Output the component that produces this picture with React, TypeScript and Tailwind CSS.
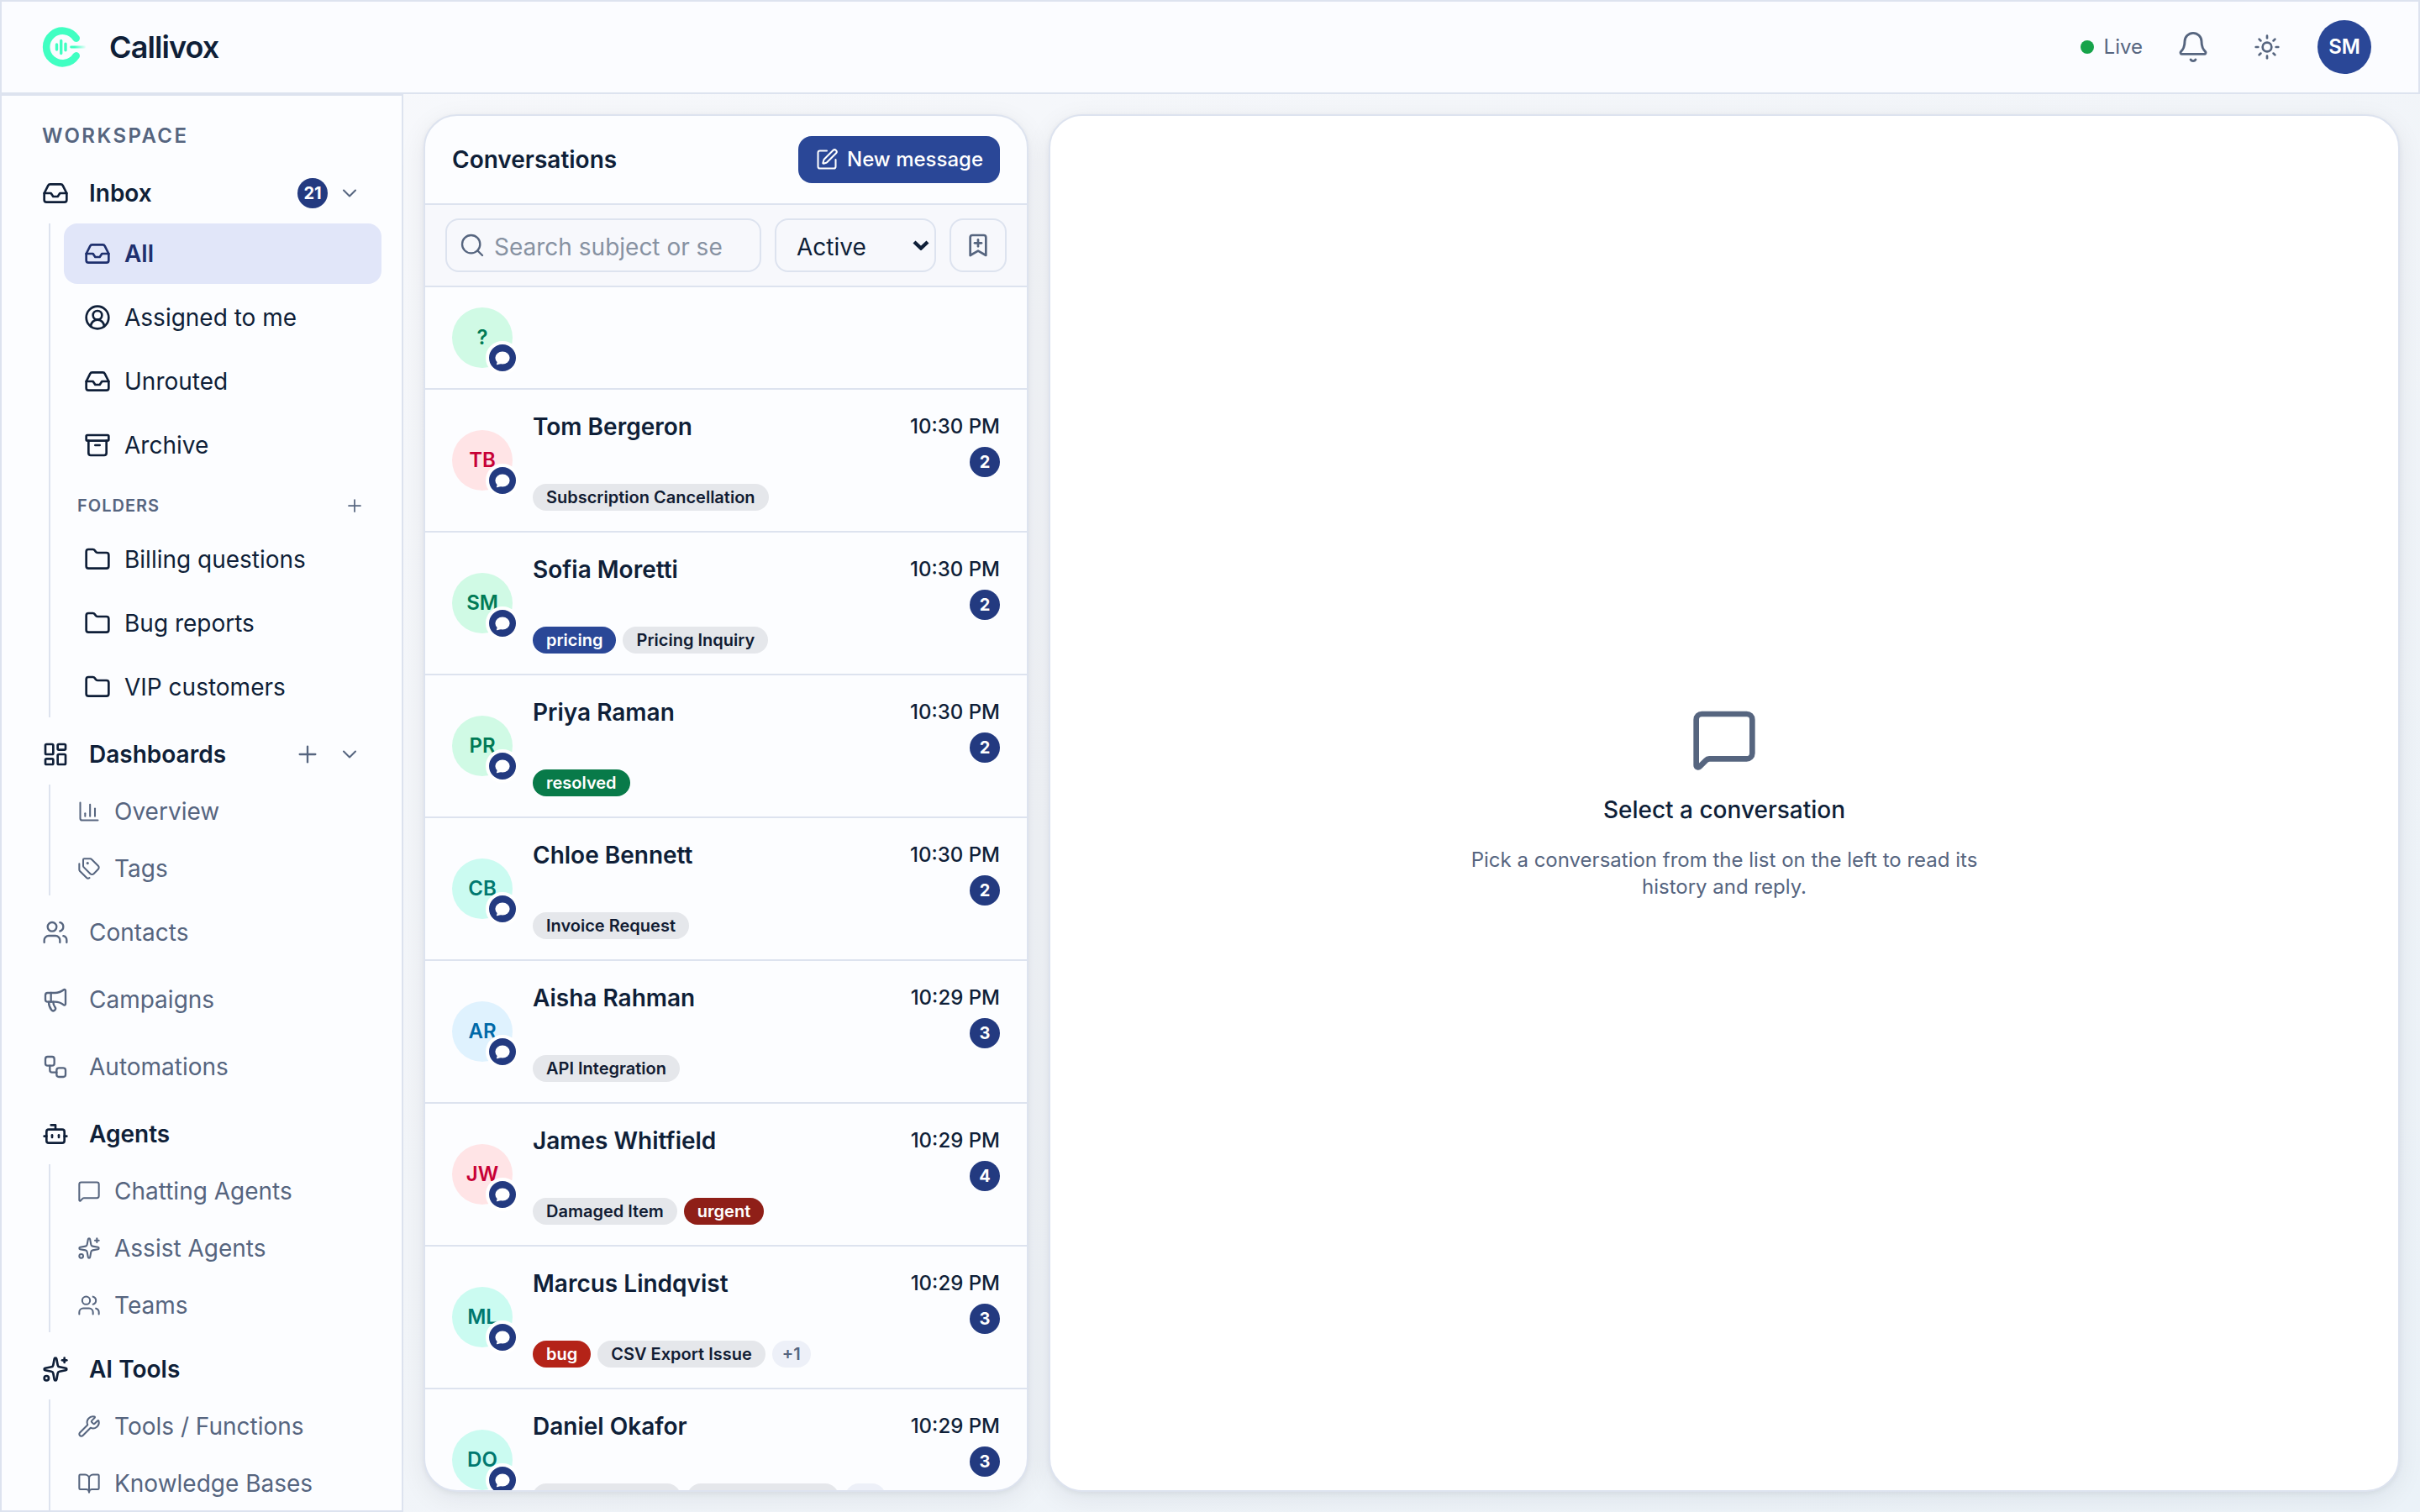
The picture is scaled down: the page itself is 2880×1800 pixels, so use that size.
import type { ReactNode } from 'react'
import { clsx } from 'clsx'
import {
  Archive,
  Bell,
  BookmarkPlus,
  BookOpen,
  Bot,
  ChartColumn,
  ChevronDown,
  CircleUserRound,
  Folder,
  Inbox,
  LayoutDashboard,
  Megaphone,
  MessageSquare,
  Plus,
  Search,
  Sparkles,
  SquarePen,
  Sun,
  Tags,
  Users,
  Workflow,
  Wrench,
  type LucideIcon,
} from 'lucide-react'

interface Tag {
  label?: string
  tone: 'gray' | 'blue' | 'green' | 'red' | 'darkRed' | 'more'
  className?: string
}

interface Conversation {
  initials: string
  avatar: string
  name?: string
  time?: string
  unread?: number
  tags?: Tag[]
}

const EMERALD = 'bg-emerald-100 text-emerald-700'
const ROSE = 'bg-[#ffe4e6] text-rose-700'
const TEAL = 'bg-teal-100 text-teal-700'
const SKY = 'bg-sky-100 text-sky-700'

const TONES: Record<Tag['tone'], string> = {
  gray: 'bg-gray-200 px-4 text-[#111c33]',
  blue: 'bg-[#2a4797] px-4 text-white',
  green: 'bg-[#087a49] px-4 text-white',
  red: 'bg-[#b42318] px-4 text-white',
  darkRed: 'bg-[#8f1f18] px-4 text-white',
  more: 'bg-[#edf0f8] px-3 text-[#56657f]',
}

const conversations: Conversation[] = [
  { initials: '?', avatar: EMERALD },
  {
    initials: 'TB',
    avatar: ROSE,
    name: 'Tom Bergeron',
    time: '10:30 PM',
    unread: 2,
    tags: [{ label: 'Subscription Cancellation', tone: 'gray' }],
  },
  {
    initials: 'SM',
    avatar: EMERALD,
    name: 'Sofia Moretti',
    time: '10:30 PM',
    unread: 2,
    tags: [
      { label: 'pricing', tone: 'blue' },
      { label: 'Pricing Inquiry', tone: 'gray' },
    ],
  },
  {
    initials: 'PR',
    avatar: EMERALD,
    name: 'Priya Raman',
    time: '10:30 PM',
    unread: 2,
    tags: [{ label: 'resolved', tone: 'green' }],
  },
  {
    initials: 'CB',
    avatar: TEAL,
    name: 'Chloe Bennett',
    time: '10:30 PM',
    unread: 2,
    tags: [{ label: 'Invoice Request', tone: 'gray' }],
  },
  {
    initials: 'AR',
    avatar: SKY,
    name: 'Aisha Rahman',
    time: '10:29 PM',
    unread: 3,
    tags: [{ label: 'API Integration', tone: 'gray' }],
  },
  {
    initials: 'JW',
    avatar: ROSE,
    name: 'James Whitfield',
    time: '10:29 PM',
    unread: 4,
    tags: [
      { label: 'Damaged Item', tone: 'gray' },
      { label: 'urgent', tone: 'darkRed' },
    ],
  },
  {
    initials: 'ML',
    avatar: TEAL,
    name: 'Marcus Lindqvist',
    time: '10:29 PM',
    unread: 3,
    tags: [
      { label: 'bug', tone: 'red' },
      { label: 'CSV Export Issue', tone: 'gray' },
      { label: '+1', tone: 'more' },
    ],
  },
  {
    initials: 'DO',
    avatar: TEAL,
    name: 'Daniel Okafor',
    time: '10:29 PM',
    unread: 3,
    tags: [
      { tone: 'gray', className: 'w-44' },
      { tone: 'gray', className: 'w-45' },
      { tone: 'more', className: 'w-12' },
    ],
  },
]

function Logo() {
  return (
    <svg width="56" height="56" viewBox="0 0 56 56" fill="none" strokeLinecap="round" aria-hidden="true">
      <defs>
        <linearGradient id="beam" x1="33" y1="0" x2="53" y2="0" gradientUnits="userSpaceOnUse">
          <stop offset="0.3" stopColor="#40ffc2" />
          <stop offset="1" stopColor="#40ffc2" stopOpacity="0" />
        </linearGradient>
      </defs>
      <path d="M40.7 17.6A19.3 19.3 0 1 0 40.7 38.4" stroke="#40ffc2" strokeWidth="8.6" />
      <path d="M17.5 25v6M22.7 20.4v15.2M28 24.2v7.6" stroke="#40ffc2" strokeWidth="3.4" />
      <rect x="33.2" y="26.6" width="19" height="2.8" rx="1.4" fill="url(#beam)" />
    </svg>
  )
}

function ChatGlyph() {
  return (
    <svg width="18" height="17" viewBox="0 0 18 17" fill="currentColor" aria-hidden="true">
      <ellipse cx="9" cy="8" rx="8.6" ry="7.4" />
      <path d="M1.6 10.5l1.2 2.2-.9 3c-.1.4.2.7.6.6L7.5 15z" />
    </svg>
  )
}

function CountBadge({ count }: { count: number }) {
  return (
    <span className="flex size-9 items-center justify-center rounded-full bg-[#233a80] text-xl font-bold text-white">
      {count}
    </span>
  )
}

function TopBar() {
  return (
    <header className="flex items-center justify-between border-2 border-[#dde3ef] bg-[#fbfcff] px-12 pr-14">
      <div className="flex items-center gap-6">
        <Logo />
        <span className="text-4xl font-semibold tracking-tight">Callivox</span>
      </div>
      <div className="flex items-center py-[22px] text-[#56657f]">
        <div className="mr-6 flex items-center gap-3 text-2xl">
          <span className="size-4 rounded-full bg-[#16a34a]" />
          Live
        </div>
        <button type="button" aria-label="Notifications" className="mr-4 flex w-18 justify-center">
          <Bell size={40} strokeWidth={1.75} />
        </button>
        <button type="button" aria-label="Toggle theme" className="mr-6 flex w-18 justify-center">
          <Sun size={32} strokeWidth={2} />
        </button>
        <button
          type="button"
          className="flex size-16 items-center justify-center rounded-full bg-[#2a4797] text-2xl font-semibold text-white"
        >
          SM
        </button>
      </div>
    </header>
  )
}

interface NavProps {
  icon: LucideIcon
  label: string
}

function NavSection({ icon: Icon, label, strong, children }: NavProps & { strong?: boolean; children?: ReactNode }) {
  return (
    <div
      className={clsx(
        'flex h-18 items-center justify-between px-6',
        strong ? 'font-semibold text-[#0f1f38]' : 'text-[#56657f]',
      )}
    >
      <a href="#" className="flex items-center gap-6">
        <Icon size={32} strokeWidth={strong ? 2 : 1.75} />
        {label}
      </a>
      <div className="flex items-center gap-3 text-[#56657f]">{children}</div>
    </div>
  )
}

function Chevron({ label }: { label: string }) {
  return (
    <button type="button" aria-label={label}>
      <ChevronDown size={28} strokeWidth={1.75} />
    </button>
  )
}

function NavGroup({ children }: { children: ReactNode }) {
  return <div className="ml-8 flex flex-col gap-1 border-l-2 border-[#dde3ef] pl-4">{children}</div>
}

function InboxLink({ icon: Icon, label, active }: NavProps & { active?: boolean }) {
  return (
    <a
      href="#"
      className={clsx(
        'flex h-18 items-center gap-4 rounded-2xl px-6',
        active ? 'bg-[#e1e6f9] font-semibold text-[#1f306e]' : 'text-[#0f1f38]',
      )}
    >
      <Icon size={32} strokeWidth={2} />
      {label}
    </a>
  )
}

function SubLink({ icon: Icon, label }: NavProps) {
  return (
    <a href="#" className="flex h-16 items-center gap-4 px-4 text-[#56657f]">
      <Icon size={28} strokeWidth={1.75} />
      {label}
    </a>
  )
}

function Sidebar() {
  return (
    <aside className="w-120 shrink-0 overflow-hidden border-2 border-[#dde3ef] bg-[#fcfdff] px-6 pt-8 text-[28px]">
      <h2 className="mb-4 px-6 text-2xl font-semibold tracking-widest text-[#56657f]">WORKSPACE</h2>
      <nav className="flex flex-col gap-2">
        <div>
          <NavSection icon={Inbox} label="Inbox" strong>
            <CountBadge count={21} />
            <Chevron label="Collapse inbox" />
          </NavSection>
          <NavGroup>
            <InboxLink icon={Inbox} label="All" active />
            <InboxLink icon={CircleUserRound} label="Assigned to me" />
            <InboxLink icon={Inbox} label="Unrouted" />
            <InboxLink icon={Archive} label="Archive" />
            <div className="flex h-14 items-center justify-between pt-2 pr-5 pl-4 text-[#56657f]">
              <h3 className="text-xl font-semibold tracking-wider">FOLDERS</h3>
              <button type="button" aria-label="Add folder">
                <Plus size={24} strokeWidth={1.75} />
              </button>
            </div>
            <InboxLink icon={Folder} label="Billing questions" />
            <InboxLink icon={Folder} label="Bug reports" />
            <InboxLink icon={Folder} label="VIP customers" />
          </NavGroup>
        </div>
        <div>
          <NavSection icon={LayoutDashboard} label="Dashboards" strong>
            <button type="button" aria-label="Add dashboard" className="mr-2">
              <Plus size={32} strokeWidth={1.75} />
            </button>
            <Chevron label="Collapse dashboards" />
          </NavSection>
          <NavGroup>
            <SubLink icon={ChartColumn} label="Overview" />
            <SubLink icon={Tags} label="Tags" />
          </NavGroup>
        </div>
        <NavSection icon={Users} label="Contacts" />
        <NavSection icon={Megaphone} label="Campaigns" />
        <NavSection icon={Workflow} label="Automations" />
        <div>
          <NavSection icon={Bot} label="Agents" strong />
          <NavGroup>
            <SubLink icon={MessageSquare} label="Chatting Agents" />
            <SubLink icon={Sparkles} label="Assist Agents" />
            <SubLink icon={Users} label="Teams" />
          </NavGroup>
        </div>
        <div>
          <NavSection icon={Sparkles} label="AI Tools" strong />
          <NavGroup>
            <SubLink icon={Wrench} label="Tools / Functions" />
            <SubLink icon={BookOpen} label="Knowledge Bases" />
          </NavGroup>
        </div>
      </nav>
    </aside>
  )
}

function Avatar({ initials, className }: { initials: string; className: string }) {
  return (
    <div
      className={clsx(
        'relative flex size-18 shrink-0 items-center justify-center rounded-full text-2xl font-semibold',
        className,
      )}
    >
      {initials}
      {/* Channel badge */}
      <span className="absolute -right-2 -bottom-2 flex size-10 items-center justify-center rounded-full border-4 border-white bg-[#233a80] text-white">
        <ChatGlyph />
      </span>
    </div>
  )
}

function ConversationRow({ initials, avatar, name, time, unread, tags }: Conversation) {
  return (
    <li className="flex shrink-0 items-center gap-6 border-b-2 border-[#dde3ef] px-8 py-6">
      <Avatar initials={initials} className={avatar} />
      {name && (
        <div className="min-w-0 flex-1">
          <div className="flex items-center justify-between">
            <span className="truncate text-[28px] leading-10 font-semibold">{name}</span>
            <time className="shrink-0 text-2xl leading-10 font-medium">{time}</time>
          </div>
          <div className="mt-1 flex justify-end">{unread && <CountBadge count={unread} />}</div>
          <div className="mt-2 flex gap-2">
            {tags?.map((tag, i) => (
              <span
                key={i}
                className={clsx(
                  'h-8 rounded-full text-xl leading-8 font-semibold whitespace-nowrap',
                  TONES[tag.tone],
                  tag.className,
                )}
              >
                {tag.label}
              </span>
            ))}
          </div>
        </div>
      )}
    </li>
  )
}

function ConversationList() {
  return (
    <section className="flex w-180 shrink-0 flex-col overflow-hidden rounded-[40px] border-2 border-[#dde3ef] bg-[#fcfdff] shadow-[0_2px_6px_rgba(15,23,42,0.06),0_8px_32px_rgba(15,23,42,0.07)]">
      <div className="flex items-center justify-between border-b-2 border-[#dde3ef] px-8 py-6">
        <h1 className="text-[28px] font-semibold">Conversations</h1>
        <button
          type="button"
          className="flex h-14 items-center gap-2.5 rounded-2xl bg-[#2a4797] px-5 text-2xl font-medium text-white"
        >
          <SquarePen size={28} strokeWidth={1.75} />
          New message
        </button>
      </div>
      <div className="flex gap-4 border-b-2 border-[#dde3ef] bg-[#f7f8fc] px-6 py-4">
        <div className="relative min-w-0 flex-1">
          <Search size={32} strokeWidth={1.75} className="absolute top-4 left-4 text-[#56657f]" />
          <input
            type="text"
            aria-label="Search conversations"
            placeholder="Search subject or sender"
            className="h-16 w-full rounded-2xl border-2 border-[#dde3ef] pt-1 pr-11 pl-14 text-[28px] placeholder:text-[#8792a2]"
          />
        </div>
        <div className="relative w-48 shrink-0">
          <select
            aria-label="Status"
            defaultValue="active"
            className="h-16 w-full appearance-none rounded-2xl border-2 border-[#dde3ef] pt-1 pl-6 text-[28px]"
          >
            <option value="active">Active</option>
          </select>
          <svg
            width="20"
            height="12"
            viewBox="0 0 20 12"
            fill="none"
            className="pointer-events-none absolute top-[26px] right-2"
            aria-hidden="true"
          >
            <path d="M2 2l8 7.5L18 2" stroke="#0f1f38" strokeWidth="4.4" />
          </svg>
        </div>
        <button
          type="button"
          aria-label="Save view"
          className="flex w-17 shrink-0 items-center justify-center rounded-2xl border-2 border-[#dde3ef] text-[#56657f]"
        >
          <BookmarkPlus size={32} strokeWidth={2} />
        </button>
      </div>
      <ul className="flex min-h-0 flex-1 flex-col overflow-hidden">
        {conversations.map((conversation) => (
          <ConversationRow key={conversation.initials} {...conversation} />
        ))}
      </ul>
    </section>
  )
}

function EmptyState() {
  return (
    <section className="flex min-w-0 flex-1 flex-col items-center justify-center rounded-[40px] border-2 border-[#dde3ef] bg-white shadow-[0_2px_6px_rgba(15,23,42,0.06),0_8px_32px_rgba(15,23,42,0.07)]">
      <MessageSquare size={80} className="text-[#56657f]" />
      <h2 className="mt-6 text-[28px] leading-10 font-medium">Select a conversation</h2>
      <p className="mt-6 max-w-160 text-center text-2xl text-[#56657f]">
        Pick a conversation from the list on the left to read its history and reply.
      </p>
    </section>
  )
}

export default function App() {
  return (
    <div className="flex h-screen flex-col overflow-hidden bg-linear-to-br from-[#f8f9fc] via-[#f2f5f9] to-[#ebf2f8] font-['Inter',sans-serif] text-[#0f1f38]">
      <TopBar />
      <div className="flex min-h-0 flex-1">
        <Sidebar />
        <main className="flex min-w-0 flex-1 gap-6 p-6">
          <ConversationList />
          <EmptyState />
        </main>
      </div>
    </div>
  )
}
